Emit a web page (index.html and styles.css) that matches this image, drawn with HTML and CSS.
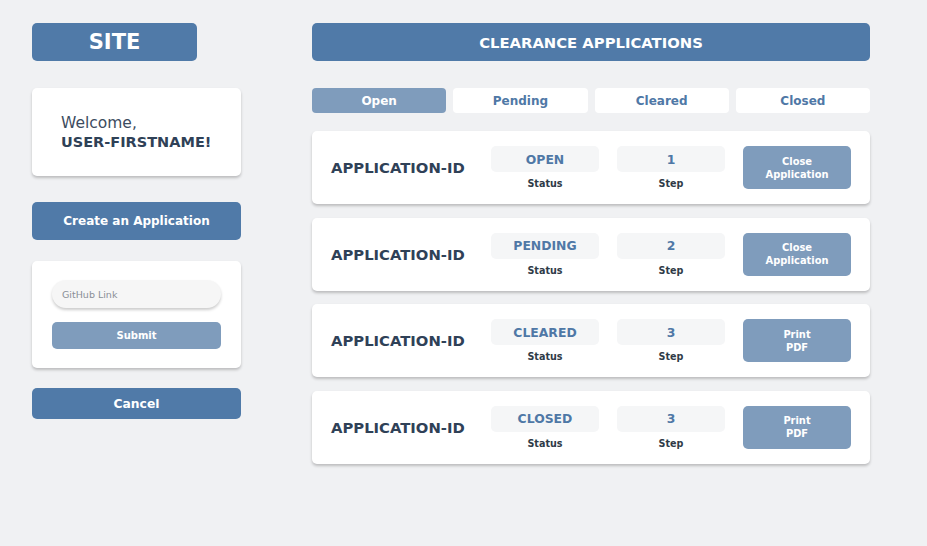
FILE: index.html
```html
<!DOCTYPE html>
<html>
<head>
<meta charset="utf-8">
<link rel="stylesheet" href="styles.css">
</head>
<body>
<div class="page">
  <aside class="side">
    <div class="logo">SITE</div>
    <div class="card welcome">
      <div class="hello">Welcome,</div>
      <div class="name">USER-FIRSTNAME!</div>
    </div>
    <button class="btn primary create">Create an Application</button>
    <div class="card form">
      <input class="link" type="text" placeholder="GitHub Link">
      <button class="btn muted submit">Submit</button>
    </div>
    <button class="btn primary cancel">Cancel</button>
  </aside>
  <main class="main">
    <div class="header">CLEARANCE APPLICATIONS</div>
    <nav class="tabs">
      <div class="tab active">Open</div>
      <div class="tab">Pending</div>
      <div class="tab">Cleared</div>
      <div class="tab">Closed</div>
    </nav>
    <div class="rows">
      <div class="card row">
        <div class="appid">APPLICATION-ID</div>
        <div class="field"><div class="pill">OPEN</div><div class="label">Status</div></div>
        <div class="field"><div class="pill">1</div><div class="label">Step</div></div>
        <button class="btn muted action">Close<br>Application</button>
      </div>
      <div class="card row">
        <div class="appid">APPLICATION-ID</div>
        <div class="field"><div class="pill">PENDING</div><div class="label">Status</div></div>
        <div class="field"><div class="pill">2</div><div class="label">Step</div></div>
        <button class="btn muted action">Close<br>Application</button>
      </div>
      <div class="card row">
        <div class="appid">APPLICATION-ID</div>
        <div class="field"><div class="pill">CLEARED</div><div class="label">Status</div></div>
        <div class="field"><div class="pill">3</div><div class="label">Step</div></div>
        <button class="btn muted action">Print<br>PDF</button>
      </div>
      <div class="card row">
        <div class="appid">APPLICATION-ID</div>
        <div class="field"><div class="pill">CLOSED</div><div class="label">Status</div></div>
        <div class="field"><div class="pill">3</div><div class="label">Step</div></div>
        <button class="btn muted action">Print<br>PDF</button>
      </div>
    </div>
  </main>
</div>
</body>
</html>
```

FILE: styles.css
```css
* { box-sizing: border-box; }
html, body { margin: 0; padding: 0; }
body {
  background: #f0f1f3;
  font-family: "DejaVu Sans", "Noto Sans", sans-serif;
  color: #2f4157;
  width: 927px;
  height: 546px;
  overflow: hidden;
}
.page {
  display: flex;
  gap: 71px;
  padding: 23px 0 0 32px;
}
.side {
  width: 209px;
  display: flex;
  flex-direction: column;
}
.logo {
  width: 165px;
  height: 38px;
  background: #507aa8;
  border-radius: 5px;
  color: #fff;
  font-weight: 700;
  font-size: 21px;
  display: flex;
  align-items: center;
  justify-content: center;
}
.card {
  background: #fff;
  border-radius: 5px;
  box-shadow: 0 2px 3px rgba(0,0,0,0.22);
}
.welcome {
  margin-top: 27px;
  height: 88px;
  padding: 2px 29px 0;
  display: flex;
  flex-direction: column;
  justify-content: center;
}
.hello {
  font-size: 15.5px;
  font-weight: 400;
  line-height: 19px;
  color: #3c4c60;
}
.name {
  font-size: 14.5px;
  font-weight: 700;
  line-height: 19px;
}
.btn {
  border: 0;
  border-radius: 5px;
  color: #fff;
  font-family: inherit;
  font-weight: 700;
  cursor: pointer;
  padding: 0;
}
.primary { background: #507aa8; }
.muted { background: #7f9cbc; }
.create {
  margin-top: 26px;
  height: 38px;
  font-size: 12px;
}
.form {
  margin-top: 21px;
  height: 107px;
  padding: 19px 20px 0;
  display: flex;
  flex-direction: column;
}
.link {
  height: 28px;
  border: 0;
  border-radius: 14px;
  background: #f6f6f6;
  box-shadow: 0 2px 3px rgba(0,0,0,0.2);
  padding: 0 10px;
  font-family: inherit;
  font-size: 9.5px;
  outline: none;
}
.link::placeholder { color: #8a8f96; }
.submit {
  margin-top: 14px;
  height: 27px;
  font-size: 10px;
}
.cancel {
  margin-top: 20px;
  height: 31px;
  font-size: 12.3px;
}
.main {
  width: 558px;
  display: flex;
  flex-direction: column;
}
.header {
  height: 38px;
  background: #507aa8;
  border-radius: 5px;
  color: #fff;
  font-weight: 700;
  font-size: 14.8px;
  display: flex;
  align-items: center;
  justify-content: center;
}
.tabs {
  margin-top: 27px;
  display: grid;
  grid-template-columns: repeat(4, 1fr);
  gap: 7px;
}
.tab {
  height: 25px;
  background: #fff;
  border-radius: 4px;
  color: #4f78a6;
  font-size: 12px;
  font-weight: 700;
  display: flex;
  align-items: center;
  justify-content: center;
}
.tab.active {
  background: #7f9cbc;
  color: #fff;
}
.rows {
  margin-top: 18px;
  display: flex;
  flex-direction: column;
  gap: 13.5px;
}
.row {
  height: 73px;
  display: flex;
  align-items: center;
  padding: 0 19px;
  gap: 18px;
}
.appid {
  flex: 1;
  font-size: 14.8px;
  font-weight: 700;
  color: #2f4157;
}
.field {
  width: 108px;
  display: flex;
  flex-direction: column;
  align-items: center;
  height: 43px;
}
.pill {
  width: 108px;
  height: 26px;
  border-radius: 5px;
  background: #f5f6f7;
  color: #4f78a6;
  font-size: 12.4px;
  font-weight: 700;
  display: flex;
  align-items: center;
  justify-content: center;
}
.label {
  margin-top: 6px;
  font-size: 9.6px;
  font-weight: 700;
  color: #2f3b48;
}
.action {
  width: 108px;
  height: 43px;
  font-size: 9.9px;
  line-height: 13px;
}
```
